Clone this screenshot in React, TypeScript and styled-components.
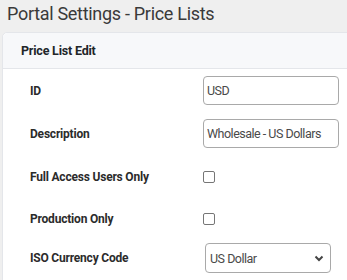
import React from "react";
import styled, { createGlobalStyle } from "styled-components";

const Global = createGlobalStyle`
  html, body { margin: 0; padding: 0; background: #efefef; }
  body { font-family: Roboto, "Liberation Sans", sans-serif; overflow: hidden; }
`;

const Page = styled.div`
  width: 347px;
  height: 280px;
  background: #efefef;
`;

const Title = styled.h1`
  margin: 0;
  height: 32px;
  padding-left: 7px;
  font-size: 18px;
  letter-spacing: -0.3px;
  font-weight: 400;
  line-height: 28px;
  color: #3a3a3a;
`;

const Card = styled.div`
  margin-left: 2px;
  width: 360px;
  background: #ffffff;
  border: 1px solid #e4e6ea;
  border-radius: 5px 0 0 0;
  height: 260px;
`;

const CardHeader = styled.div`
  height: 35px;
  display: flex;
  align-items: center;
  padding-left: 18px;
  background: #f7f8fa;
  border-bottom: 1px solid #e4e6ea;
  border-radius: 5px 0 0 0;
  font-size: 12.5px;
  letter-spacing: -0.2px;
  font-weight: 700;
  color: #212529;
`;

const Body = styled.div`
  display: flex;
  flex-direction: column;
`;

const Row = styled.div<{ $h: number }>`
  height: ${(p) => p.$h}px;
  display: grid;
  grid-template-columns: 173px 1fr;
  align-items: center;
  padding-left: 27px;
`;

const Label = styled.label`
  font-size: 12px;
  letter-spacing: -0.2px;
  font-weight: 700;
  color: #2b2b2b;
`;

const Input = styled.input`
  box-sizing: border-box;
  width: 136px;
  height: 29px;
  margin: 0;
  padding: 0 3px;
  border: 1px solid #a9a9a9;
  border-radius: 4px;
  font-family: Roboto, "Liberation Sans", sans-serif;
  font-size: 12.5px;
  letter-spacing: -0.5px;
  color: #4a4a4a;
  outline: none;
`;

const Check = styled.span`
  display: block;
  box-sizing: border-box;
  width: 12px;
  height: 12px;
  border: 1px solid #767676;
  border-radius: 2px;
  background: #fff;
`;

const Select = styled.div`
  box-sizing: border-box;
  margin-left: 2px;
  width: 126px;
  height: 30px;
  border: 1px solid #a9a9a9;
  border-radius: 4px;
  display: flex;
  align-items: center;
  justify-content: space-between;
  padding: 0 6px 0 4px;
  font-size: 12.5px;
  letter-spacing: -0.5px;
  color: #4a4a4a;
`;

const Chevron = () => (
  <svg width="10" height="7" viewBox="0 0 10 7">
    <path d="M1.5 1.5 L5 5 L8.5 1.5" fill="none" stroke="#444" strokeWidth="2" />
  </svg>
);

export default function App() {
  return (
    <Page>
      <Global />
      <Title>Portal Settings - Price Lists</Title>
      <Card>
        <CardHeader>Price List Edit</CardHeader>
        <Body>
          <Row $h={43}>
            <Label>ID</Label>
            <Input defaultValue="USD" />
          </Row>
          <Row $h={43}>
            <Label>Description</Label>
            <Input defaultValue="Wholesale - US Dollars" />
          </Row>
          <Row $h={43}>
            <Label>Full Access Users Only</Label>
            <Check />
          </Row>
          <Row $h={41}>
            <Label>Production Only</Label>
            <Check />
          </Row>
          <Row $h={38}>
            <Label>ISO Currency Code</Label>
            <Select>
              <span>US Dollar</span>
              <Chevron />
            </Select>
          </Row>
        </Body>
      </Card>
    </Page>
  );
}
